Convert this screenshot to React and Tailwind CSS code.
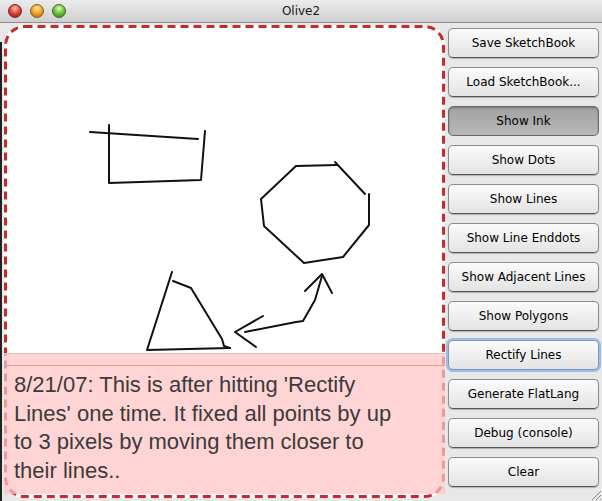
import React from "react";

const buttons = [
  { label: "Save SketchBook" },
  { label: "Load SketchBook..." },
  { label: "Show Ink", pressed: true },
  { label: "Show Dots" },
  { label: "Show Lines" },
  { label: "Show Line Enddots" },
  { label: "Show Adjacent Lines" },
  { label: "Show Polygons" },
  { label: "Rectify Lines", focused: true },
  { label: "Generate FlatLang" },
  { label: "Debug (console)" },
  { label: "Clear" },
];

function AquaButton({ label, pressed, focused }) {
  let cls =
    "h-[30px] w-full rounded-[5px] border text-[12px] text-black flex items-center justify-center font-['DejaVu_Sans',sans-serif] ";
  if (pressed) {
    cls +=
      "bg-gradient-to-b from-[#a2a2a2] to-[#b8b8b8] border-[#6a6a6a] shadow-[inset_0_1px_2px_rgba(0,0,0,0.3)]";
  } else if (focused) {
    cls +=
      "bg-gradient-to-b from-[#fbfbfb] to-[#e3e3e3] border-[#7a99c4] shadow-[0_0_0_2px_#9cbde6,0_1px_1px_rgba(0,0,0,0.3)]";
  } else {
    cls +=
      "bg-gradient-to-b from-[#fbfbfb] to-[#e3e3e3] border-[#8c8c8c] border-b-[#555] shadow-[0_1px_1px_rgba(0,0,0,0.25)]";
  }
  return <div className={cls}>{label}</div>;
}

export default function App() {
  return (
    <div className="relative w-[602px] h-[501px] overflow-hidden bg-[#e8e8e8]">
      {/* Title bar */}
      <div className="relative h-[23px] bg-gradient-to-b from-[#ececec] to-[#cfcfcf] border-b border-[#8e8e8e] flex items-center">
        <div className="flex items-center gap-[8px] pl-[8px]">
          <div className="w-[14px] h-[14px] rounded-full border border-[#7a2620] bg-[radial-gradient(circle_at_50%_30%,#ffc0b0,#dc3f34_50%,#8e1c14)]" />
          <div className="w-[14px] h-[14px] rounded-full border border-[#8e5c10] bg-[radial-gradient(circle_at_50%_30%,#ffe6a8,#f09e22_50%,#a0620c)]" />
          <div className="w-[14px] h-[14px] rounded-full border border-[#37721a] bg-[radial-gradient(circle_at_50%_30%,#dcffb8,#6cbe36_50%,#2f7214)]" />
        </div>
        <div className="absolute inset-0 flex items-center justify-center text-[12px] text-[#1a1a1a] font-['DejaVu_Sans',sans-serif]">
          Olive2
        </div>
      </div>

      {/* Body */}
      <div className="flex h-[478px]">
        <div className="w-[2px] mt-[19px] bg-[#1e241e]" />
        <div className="ml-[2px] mt-[2px] relative w-[441px] h-[473px] rounded-[20px] bg-white flex flex-col">
          {/* Drawing area */}
          <div className="h-[328px]">
            <svg
              width="441"
              height="328"
              viewBox="4 25 441 328"
              fill="none"
              stroke="#111"
              strokeWidth="2"
              strokeLinecap="round"
              strokeLinejoin="round"
            >
              <path d="M90 132 L198 139" />
              <path d="M109 125 L109 183 L201 180 L205 131" />
              <path d="M296 166 L337 165" />
              <path d="M335 162 L365 194" />
              <path d="M369 194 L369 225 L343 257 L304 263 L264 226 L261 199 L296 166" />
              <path d="M305 291 L322 274 L332 293" />
              <path d="M322 276 L315 300 L303 321 L296 322 L245 332" />
              <path d="M263 316 L235 332 L256 347" />
              <path d="M172 272 L147 350 L230 348" />
              <path d="M173 281 L191 288 L222 339 L224 346 L230 348" />
            </svg>
          </div>

          {/* Dashed border */}
          <svg
            className="absolute inset-0 pointer-events-none"
            width="441"
            height="473"
          >
            <rect
              x="1.5"
              y="1.5"
              width="438"
              height="470"
              rx="19"
              fill="none"
              stroke="#c52a2f"
              strokeWidth="3"
              strokeDasharray="8 5"
            />
          </svg>

          {/* Note */}
          <div className="relative z-10 h-[141px] bg-[rgba(255,196,196,0.72)] border-t border-[#dcc0c0]">
            <div className="h-[12px] border-b border-[#e79a9a]" />
            <div className="pl-[10px] pt-[5px] text-[22px] leading-[28.5px] text-[#3b3b3b] font-['Liberation_Sans',Arial,sans-serif]">
              8/21/07: This is after hitting 'Rectify
              <br />
              Lines' one time. It fixed all points by up
              <br />
              to 3 pixels by moving them closer to
              <br />
              their lines..
            </div>
          </div>
        </div>

        {/* Buttons */}
        <div className="ml-[3px] mt-[5px] w-[151px] flex flex-col gap-[9px]">
          {buttons.map((b) => (
            <AquaButton key={b.label} {...b} />
          ))}
        </div>
      </div>

      {/* Resize grip */}
      <svg
        className="absolute right-0 bottom-0"
        width="13"
        height="13"
        viewBox="0 0 13 13"
        stroke="#8a8a8a"
        strokeWidth="1"
      >
        <path d="M12 3 L3 12" />
        <path d="M12 7 L7 12" />
        <path d="M12 11 L11 12" />
      </svg>
    </div>
  );
}
